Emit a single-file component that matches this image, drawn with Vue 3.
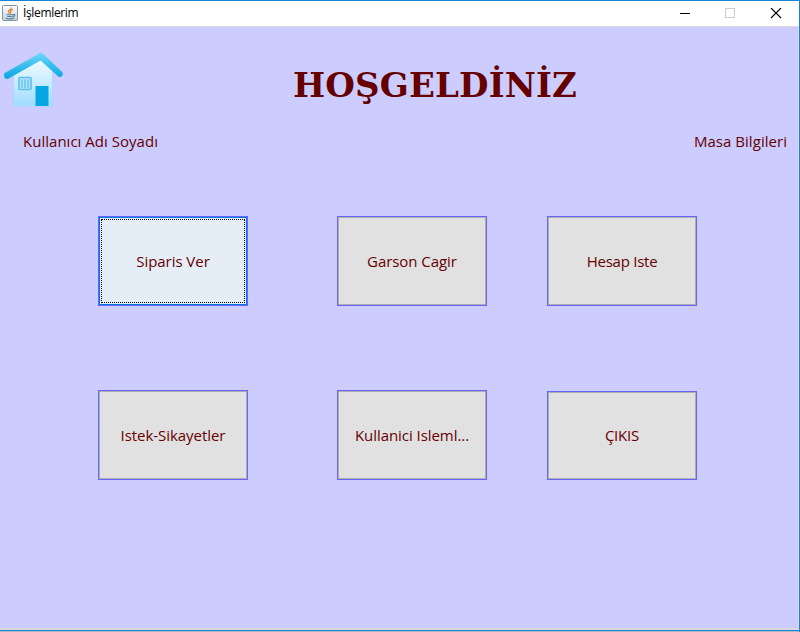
<script setup>
const rows = [
  [
    { label: 'Siparis Ver', kind: 'order', focused: true },
    { label: 'Garson Cagir', kind: 'waiter' },
    { label: 'Hesap Iste', kind: 'bill' },
  ],
  [
    { label: 'Istek-Sikayetler', kind: 'feedback' },
    { label: 'Kullanici Isleml...', kind: 'account' },
    { label: 'ÇIKIS', kind: 'exit' },
  ],
]
</script>

<template>
  <div class="window">
    <header class="titlebar">
      <svg class="java" width="16" height="16" viewBox="0 0 16 16">
        <defs>
          <linearGradient id="tile" x1="0" y1="0" x2="0" y2="1">
            <stop offset="0" stop-color="#fff" />
            <stop offset="1" stop-color="#c3d1dc" />
          </linearGradient>
        </defs>
        <rect x=".5" y=".5" width="15" height="15" rx="1" fill="url(#tile)" stroke="#7e929f" />
        <g fill="none" stroke-linecap="round">
          <path d="M9.2 2.8C9.6 4.4 5.9 5 6.4 6.6C6.7 7.3 7.5 7.5 7.3 8.3M10.5 4.6C8.6 5.2 8.2 6 8.8 6.9C9 7.3 8.8 7.8 8.4 8.2" stroke="#e8822e" stroke-width="1.2" />
          <path d="M5 9.8H10.3M5.6 11.5H9.8M4 13.3C6.5 14 10 13.9 12 13M11 9.6C13.6 8.8 13.4 11.2 11 11.5" stroke="#537d9d" stroke-width="1.1" />
        </g>
      </svg>
      <span class="caption">İşlemlerim</span>
      <svg class="controls" width="102" height="12" viewBox="0 0 102 12" shape-rendering="crispEdges">
        <rect x="0" y="5" width="10" height="1" fill="#000" />
        <rect x="45.5" y=".5" width="9" height="9" fill="none" stroke="#ccc" />
        <path d="M91 0L101 10M101 0L91 10" fill="none" stroke="#000" shape-rendering="auto" stroke-width="1.15" />
      </svg>
    </header>
    <main class="content">
      <div class="hero">
        <svg class="home" width="60" height="56" viewBox="0 0 60 56">
          <defs>
            <linearGradient id="wall" x1="0" y1="0" x2="0" y2="1">
              <stop offset="0" stop-color="#f5fcff" />
              <stop offset="1" stop-color="#a0dcff" />
            </linearGradient>
            <linearGradient id="roof" x1="0" y1="0" x2="0" y2="1">
              <stop offset="0" stop-color="#70d7fb" />
              <stop offset="1" stop-color="#05a5df" />
            </linearGradient>
          </defs>
          <path d="M9.500 21L37 5L48.500 18V52.500Q48.500 54 47 54H11Q9.500 54 9.500 52.500Z" fill="url(#wall)" stroke="#9fd6fb" stroke-width=".6" />
          <path d="M.7 21L35.500 1.200Q37 .2 38.500 1.300L58.200 20Q60 23 57 25Q55 25.500 53.500 23.800L36.500 8.500L4.600 26.500Q1.500 27.800 .3 25Q-.4 22.500 .7 21Z" fill="url(#roof)" />
          <rect x="15" y="25.500" width="12" height="12" rx="1" fill="#b4e4fb" stroke="#5cc0ec" stroke-width="1.6" />
          <path d="M18 27.500V36M21 27.500V36M24 27.500V36" stroke="#5cc0ec" stroke-width="1.300" />
          <rect x="31.500" y="34" width="13" height="20" fill="#04a7e2" />
        </svg>
        <h1 class="welcome">HOŞGELDİNİZ</h1>
      </div>
      <div class="info">
        <span class="user">Kullanıcı Adı Soyadı</span>
        <span class="table-info">Masa Bilgileri</span>
      </div>
      <div class="grid">
        <div v-for="(row, i) in rows" :key="i" class="row">
          <button
            v-for="item in row"
            :key="item.kind"
            type="button"
            :class="['tile', item.kind, { focused: item.focused }]"
          ><span class="label">{{ item.label }}</span></button>
        </div>
      </div>
    </main>
    <div class="frame-bottom"></div>
  </div>
</template>

<style>
body {
  margin: 0;
  overflow: hidden;
}
</style>

<style scoped>
.window {
  box-sizing: border-box;
  width: 800px;
  height: 632px;
  display: flex;
  flex-direction: column;
  border-top: 1px solid #1883d7;
  border-right: 1px solid #1883d7;
  background: #ccccff;
  font-family: "Open Sans", "Noto Sans", sans-serif;
}
.titlebar {
  box-sizing: border-box;
  height: 26px;
  flex: none;
  display: flex;
  align-items: flex-start;
  padding: 4px 17px 0 2px;
  background: #fff;
  border-bottom: 1px solid #d9d9d9;
}
.java { flex: none; }
.caption {
  margin-left: 5px;
  font-size: 12px;
  line-height: 16px;
  letter-spacing: -0.35px;
  white-space: nowrap;
  color: #000;
}
.controls {
  margin-left: auto;
  margin-top: 3px;
}
.content {
  flex: 1;
  border-right: 1px solid #dcdce0;
  color: #660000;
}
.hero {
  display: flex;
  height: 103px;
}
.home {
  flex: none;
  margin: 25px 0 0 4px;
}
.welcome {
  margin: 36px 0 0 229px;
  font: bold 34px/44px "DejaVu Serif", serif;
  letter-spacing: 0.15px;
  white-space: nowrap;
}
.info {
  display: flex;
  justify-content: space-between;
  height: 23px;
  padding: 0 11px 0 23px;
  font-size: 15px;
  line-height: 22px;
  white-space: nowrap;
}
.user { letter-spacing: 0.02px; }
.table-info { letter-spacing: 0.04px; }
.grid {
  display: flex;
  flex-direction: column;
  gap: 84px;
  padding: 63px 0 0 98px;
}
.row {
  display: flex;
  align-items: flex-end;
}
.tile {
  box-sizing: border-box;
  width: 150px;
  height: 90px;
  padding: 0;
  border: 1px solid #6666ff;
  background: #e1e1e1;
  box-shadow: inset 0 0 0 1px #adadad;
  color: #660000;
  font: 15px/22px "Open Sans", "Noto Sans", sans-serif;
  letter-spacing: -0.05px;
  white-space: nowrap;
}
.waiter, .account { margin-left: 89px; }
.bill, .exit { margin-left: 60px; }
.bill { letter-spacing: -0.25px; }
.exit {
  height: 89px;
  padding-bottom: 2px;
  letter-spacing: -0.2px;
}
.focused {
  padding: 2px;
  background: #e5edf7;
  box-shadow: inset 0 0 0 1px #0078d7;
}
.focused .label {
  box-sizing: border-box;
  display: flex;
  align-items: center;
  justify-content: center;
  width: 144px;
  height: 84px;
  border: 1px dotted #000;
}
.frame-bottom {
  height: 1px;
  flex: none;
  border-top: 2px solid #dbd8dc;
  border-bottom: 1px solid #b5b5c4;
  background: #1883d7;
}
</style>
